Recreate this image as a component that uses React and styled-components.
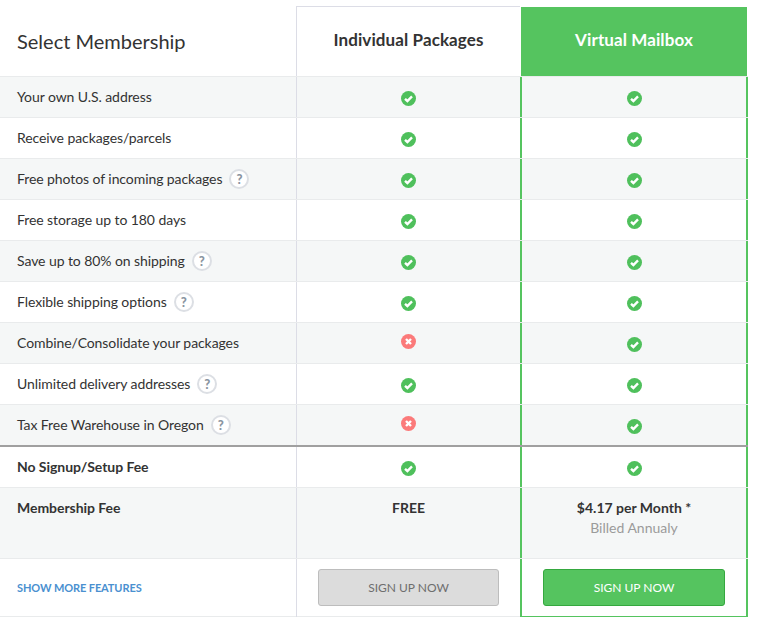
import React from 'react';
import styled, { createGlobalStyle } from 'styled-components';

const GlobalStyle = createGlobalStyle`
	body {
		margin: 0;
		background: #fff;
		font-family: Lato, "Open Sans", sans-serif;
		color: #333;
	}
`;

const Table = styled.div`
	width: 748px;
	padding-top: 6px;
`;

const Row = styled.div`
	display: grid;
	grid-template-columns: 296px 224px 228px;
	height: ${(p) => p.$height || 41}px;
	box-sizing: border-box;
	background: ${(p) => (p.$shaded ? '#f5f7f7' : '#fff')};
	border-bottom: ${(p) => (p.$heavy ? '2px solid #a0a0a0' : '1px solid #e9ebec')};
`;

const Label = styled.div`
	display: flex;
	align-items: ${(p) => (p.$top ? 'flex-start' : 'center')};
	padding: ${(p) => (p.$top ? '11px 0 0 17px' : '0 0 2px 17px')};
	font-size: 14px;
	font-weight: ${(p) => (p.$bold ? 700 : 400)};
	letter-spacing: ${(p) => (p.$bold ? '-0.05px' : '-0.08px')};
	color: #333;
`;

const Title = styled.div`
	display: flex;
	align-items: center;
	padding-left: 17px;
	font-size: 20px;
	color: #333;
`;

const Cell = styled.div`
	display: flex;
	flex-direction: column;
	align-items: center;
	justify-content: ${(p) => (p.$top ? 'flex-start' : 'center')};
	box-sizing: border-box;
	padding-top: ${(p) => (p.$top ? '11px' : '0')};
	border-left: 1px solid #dcdde6;
	font-size: 14px;
`;

const ButtonCell = styled(Cell)`
	padding-bottom: 2px;
`;

const MailCell = styled(Cell)`
	border-left: 2px solid #55c45f;
	border-right: 2px solid #55c45f;
	${(p) => p.$last && 'height: 59px; border-bottom: 2px solid #55c45f;'}
`;

const HeadCell = styled(Cell)`
	border-top: 1px solid #dcdde6;
	font-size: 17px;
	font-weight: 700;
	letter-spacing: 0.1px;
	padding-bottom: 5px;
`;

const MailHead = styled(HeadCell)`
	border: 0;
	margin: 1px 1px 0;
	background: #55c45f;
	color: #fff;
`;

const Strong = styled.div`
	font-weight: 700;
`;

const Note = styled.div`
	margin-top: 3px;
	color: #9b9b9b;
`;

const Help = styled.span`
	display: inline-flex;
	align-items: center;
	justify-content: center;
	box-sizing: border-box;
	width: 20px;
	height: 20px;
	margin: 2px 0 0 7px;
	border: 2px solid #dcdfe4;
	border-radius: 50%;
	background: #fff;
	color: #8a95a1;
	font-size: 13px;
	font-weight: 900;
`;

const More = styled.a`
	color: #4a90d0;
	font-size: 11px;
	font-weight: 700;
	letter-spacing: -0.1px;
	text-transform: uppercase;
`;

const SignUp = styled.button`
	width: ${(p) => (p.$primary ? 182 : 181)}px;
	height: 37px;
	border-radius: 3px;
	border: 1px solid ${(p) => (p.$primary ? '#35a83f' : '#bdbdbd')};
	background: ${(p) => (p.$primary ? '#55c45f' : '#dcdcdc')};
	color: ${(p) => (p.$primary ? '#fff' : '#6e6e6e')};
	font-family: inherit;
	font-size: 12px;
	text-transform: uppercase;
`;

const Mark = styled.svg`
	width: 15px;
	height: 15px;
	display: block;
	position: relative;
	top: ${(p) => p.$shift || 0}px;
`;

const Check = ({ shift }) => (
	<Mark viewBox="0 0 15 15" $shift={shift}>
		<circle cx="7.5" cy="7.5" r="7.5" fill="#4fc05c" />
		<path d="M4 7.8 6.4 10 11 5.4" fill="none" stroke="#fff" strokeWidth="2.4" />
	</Mark>
);

const Cross = ({ shift }) => (
	<Mark viewBox="0 0 15 15" $shift={shift}>
		<circle cx="7.5" cy="7.5" r="7.5" fill="#fb7a7a" />
		<path d="M5 5 10 10M10 5 5 10" fill="none" stroke="#fff" strokeWidth="2.4" />
	</Mark>
);

const features = [
	{ label: 'Your own U.S. address', included: true },
	{ label: 'Receive packages/parcels', included: true },
	{ label: 'Free photos of incoming packages', included: true, help: true },
	{ label: 'Free storage up to 180 days', included: true },
	{ label: 'Save up to 80% on shipping', included: true, help: true },
	{ label: 'Flexible shipping options', included: true, help: true },
	{ label: 'Combine/Consolidate your packages', included: false },
	{ label: 'Unlimited delivery addresses', included: true, help: true },
	{ label: 'Tax Free Warehouse in Oregon', included: false, help: true },
];

const App = () => (
	<>
		<GlobalStyle />
		<Table>
			<Row $height={71}>
				<Title>Select Membership</Title>
				<HeadCell>Individual Packages</HeadCell>
				<MailHead>Virtual Mailbox</MailHead>
			</Row>
			{features.map((feature, index) => {
				const last = index === features.length - 1;
				return (
					<Row key={feature.label} $shaded={index % 2 === 0} $heavy={last} $height={last ? 42 : 41}>
						<Label>
							{feature.label}
							{feature.help && <Help>?</Help>}
						</Label>
						<Cell>{feature.included ? <Check shift={1} /> : <Cross shift={-2} />}</Cell>
						<MailCell>
							<Check shift={1} />
						</MailCell>
					</Row>
				);
			})}
			<Row>
				<Label $bold>No Signup/Setup Fee</Label>
				<Cell>
					<Check shift={1} />
				</Cell>
				<MailCell>
					<Check shift={1} />
				</MailCell>
			</Row>
			<Row $shaded $height={71}>
				<Label $bold $top>
					Membership Fee
				</Label>
				<Cell $top>
					<Strong>FREE</Strong>
				</Cell>
				<MailCell $top>
					<Strong>$4.17 per Month *</Strong>
					<Note>Billed Annualy</Note>
				</MailCell>
			</Row>
			<Row $height={58}>
				<Label>
					<More>Show more features</More>
				</Label>
				<ButtonCell>
					<SignUp>Sign up now</SignUp>
				</ButtonCell>
				<MailCell $last>
					<SignUp $primary>Sign up now</SignUp>
				</MailCell>
			</Row>
		</Table>
	</>
);

export default App;
